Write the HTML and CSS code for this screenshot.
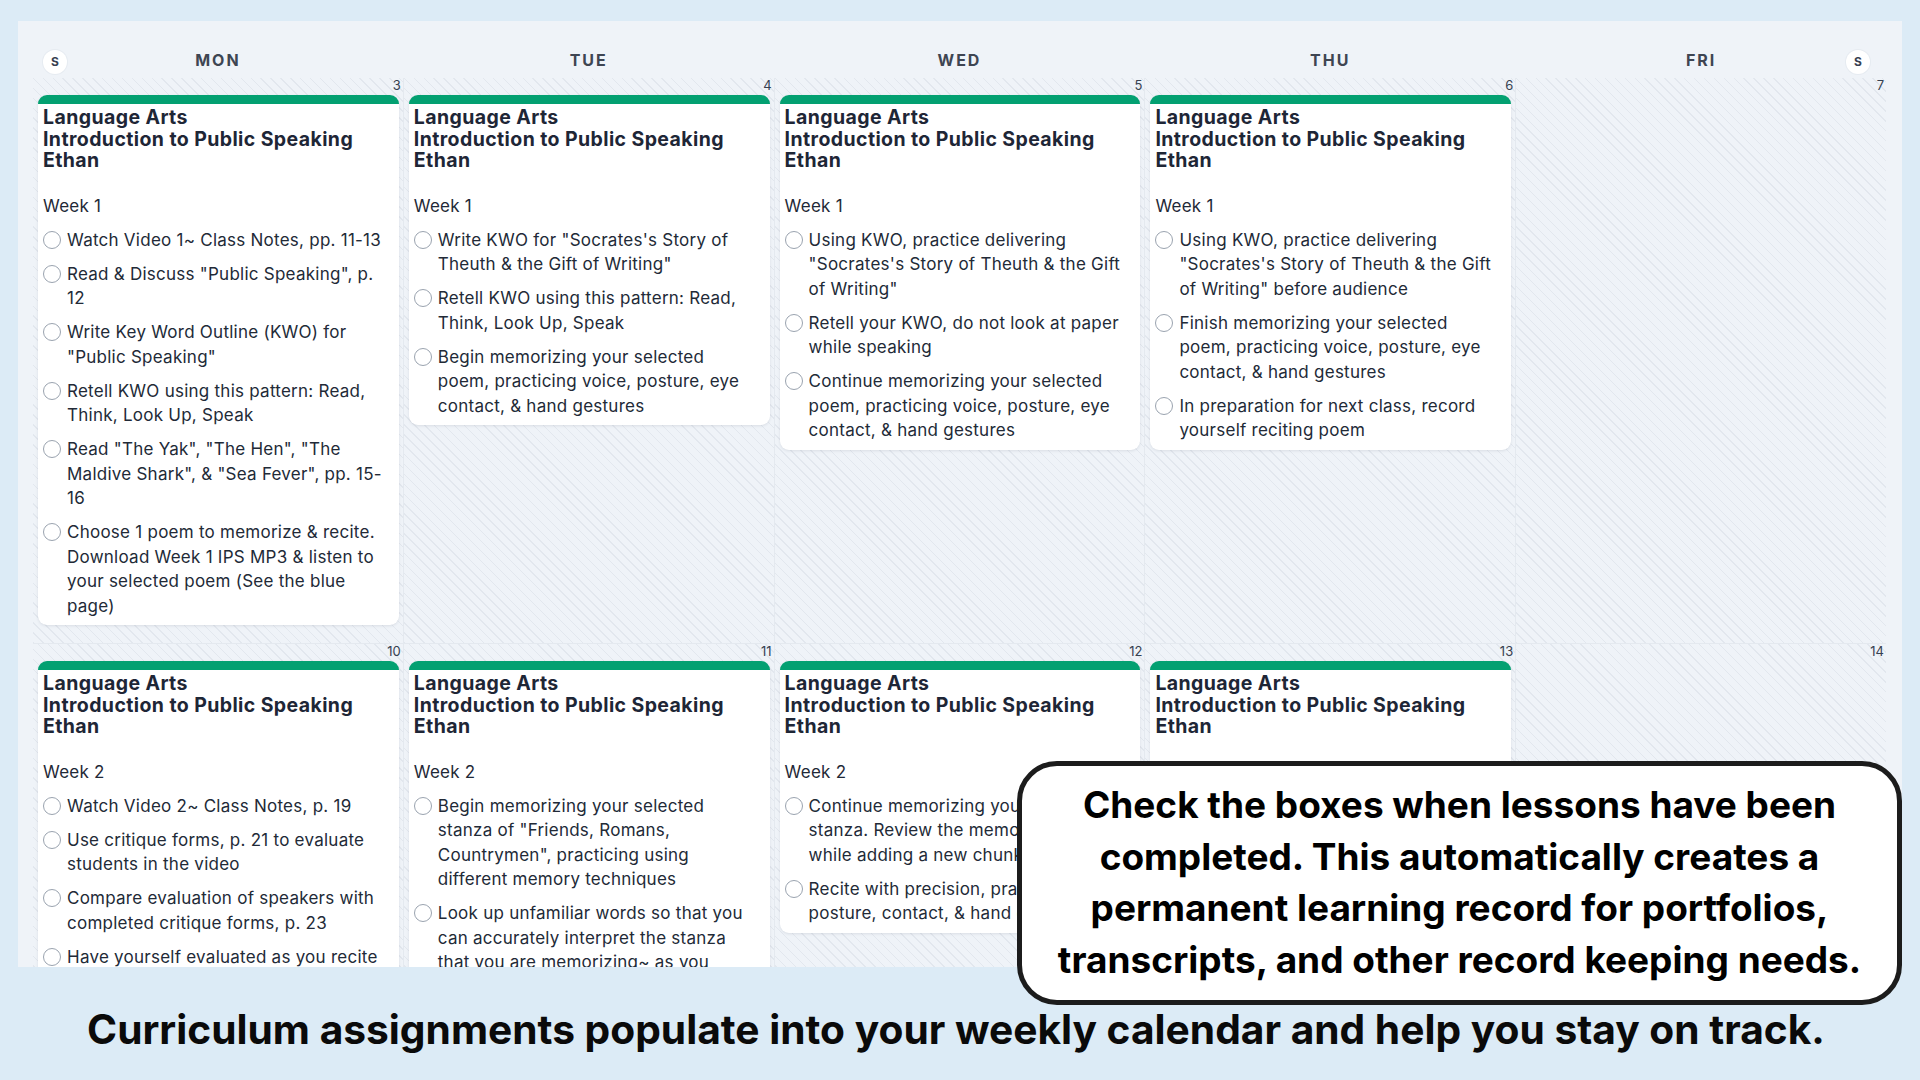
FILE: index.html
```html
<!DOCTYPE html>
<html>
<head>
<meta charset="utf-8">
<title>Weekly Planner</title>
<link rel="stylesheet" href="styles.css">
</head>
<body>
<div class="screen">

  <div class="calendar">
    <div class="weekdays">
      <span class="toggle toggle-left">S</span>
      <div class="dayname">MON</div>
      <div class="dayname">TUE</div>
      <div class="dayname">WED</div>
      <div class="dayname">THU</div>
      <div class="dayname">FRI</div>
      <span class="toggle toggle-right">S</span>
    </div>

    <div class="weeks">
      <!-- week 1 -->
      <div class="cell">
        <div class="date">3</div>
        <div class="lesson">
          <div class="lesson-title">Language Arts<br>Introduction to Public Speaking<br>Ethan</div>
          <div class="week">Week 1</div>
          <ul class="tasks">
            <li><span class="tick"></span><span>Watch Video 1~ Class Notes, pp. 11-13</span></li>
            <li><span class="tick"></span><span>Read &amp; Discuss "Public Speaking", p. 12</span></li>
            <li><span class="tick"></span><span>Write Key Word Outline (KWO) for "Public Speaking"</span></li>
            <li><span class="tick"></span><span>Retell KWO using this pattern: Read, Think, Look Up, Speak</span></li>
            <li><span class="tick"></span><span>Read "The Yak", "The Hen", "The Maldive Shark", &amp; "Sea Fever", pp. 15-16</span></li>
            <li><span class="tick"></span><span>Choose 1 poem to memorize &amp; recite. Download Week 1 IPS MP3 &amp; listen to your selected poem (See the blue page)</span></li>
          </ul>
        </div>
      </div>
      <div class="cell">
        <div class="date">4</div>
        <div class="lesson">
          <div class="lesson-title">Language Arts<br>Introduction to Public Speaking<br>Ethan</div>
          <div class="week">Week 1</div>
          <ul class="tasks">
            <li><span class="tick"></span><span>Write KWO for "Socrates's Story of Theuth &amp; the Gift of Writing"</span></li>
            <li><span class="tick"></span><span>Retell KWO using this pattern: Read, Think, Look Up, Speak</span></li>
            <li><span class="tick"></span><span>Begin memorizing your selected poem, practicing voice, posture, eye contact, &amp; hand gestures</span></li>
          </ul>
        </div>
      </div>
      <div class="cell">
        <div class="date">5</div>
        <div class="lesson">
          <div class="lesson-title">Language Arts<br>Introduction to Public Speaking<br>Ethan</div>
          <div class="week">Week 1</div>
          <ul class="tasks">
            <li><span class="tick"></span><span>Using KWO, practice delivering "Socrates's Story of Theuth &amp; the Gift of Writing"</span></li>
            <li><span class="tick"></span><span>Retell your KWO, do not look at paper while speaking</span></li>
            <li><span class="tick"></span><span>Continue memorizing your selected poem, practicing voice, posture, eye contact, &amp; hand gestures</span></li>
          </ul>
        </div>
      </div>
      <div class="cell">
        <div class="date">6</div>
        <div class="lesson">
          <div class="lesson-title">Language Arts<br>Introduction to Public Speaking<br>Ethan</div>
          <div class="week">Week 1</div>
          <ul class="tasks">
            <li><span class="tick"></span><span>Using KWO, practice delivering "Socrates's Story of Theuth &amp; the Gift of Writing" before audience</span></li>
            <li><span class="tick"></span><span>Finish memorizing your selected poem, practicing voice, posture, eye contact, &amp; hand gestures</span></li>
            <li><span class="tick"></span><span>In preparation for next class, record yourself reciting poem</span></li>
          </ul>
        </div>
      </div>
      <div class="cell">
        <div class="date">7</div>
      </div>

      <!-- week 2 -->
      <div class="cell">
        <div class="date">10</div>
        <div class="lesson">
          <div class="lesson-title">Language Arts<br>Introduction to Public Speaking<br>Ethan</div>
          <div class="week">Week 2</div>
          <ul class="tasks">
            <li><span class="tick"></span><span>Watch Video 2~ Class Notes, p. 19</span></li>
            <li><span class="tick"></span><span>Use critique forms, p. 21 to evaluate students in the video</span></li>
            <li><span class="tick"></span><span>Compare evaluation of speakers with completed critique forms, p. 23</span></li>
            <li><span class="tick"></span><span>Have yourself evaluated as you recite your selected poem</span></li>
          </ul>
        </div>
      </div>
      <div class="cell">
        <div class="date">11</div>
        <div class="lesson">
          <div class="lesson-title">Language Arts<br>Introduction to Public Speaking<br>Ethan</div>
          <div class="week">Week 2</div>
          <ul class="tasks">
            <li><span class="tick"></span><span>Begin memorizing your selected stanza of "Friends, Romans, Countrymen", practicing using different memory techniques</span></li>
            <li><span class="tick"></span><span>Look up unfamiliar words so that you can accurately interpret the stanza that you are memorizing~ as you practice</span></li>
          </ul>
        </div>
      </div>
      <div class="cell">
        <div class="date">12</div>
        <div class="lesson">
          <div class="lesson-title">Language Arts<br>Introduction to Public Speaking<br>Ethan</div>
          <div class="week">Week 2</div>
          <ul class="tasks">
            <li><span class="tick"></span><span>Continue memorizing your selected stanza. Review the memorized lines while adding a new chunk</span></li>
            <li><span class="tick"></span><span>Recite with precision, practicing voice, posture, contact, &amp; hand gestures</span></li>
          </ul>
        </div>
      </div>
      <div class="cell">
        <div class="date">13</div>
        <div class="lesson">
          <div class="lesson-title">Language Arts<br>Introduction to Public Speaking<br>Ethan</div>
          <div class="week">Week 2</div>
          <ul class="tasks">
            <li><span class="tick"></span><span>Recite your selected stanza for an audience</span></li>
            <li><span class="tick"></span><span>Record yourself reciting the stanza</span></li>
          </ul>
        </div>
      </div>
      <div class="cell">
        <div class="date">14</div>
      </div>
    </div>
  </div>

  <p class="caption">Curriculum assignments populate into your weekly calendar and help you stay on track.</p>

  <div class="callout">
    Check the boxes when lessons have been<br>
    completed. This automatically creates a<br>
    permanent learning record for portfolios,<br>
    transcripts, and other record keeping needs.
  </div>

</div>
</body>
</html>
```

FILE: styles.css
```css
body {
  margin: 0;
  background: #dcebf6;
  font-family: Inter, "Noto Sans", sans-serif;
  color: #1f2937;
}

.screen {
  position: relative;
  width: 1920px;
  height: 1080px;
  overflow: hidden;
}

/* calendar panel */
.calendar {
  margin: 21px 18px 0;
  height: 946px;
  padding: 0 16px 0 15px;
  box-sizing: border-box;
  background: #eff3f8;
  overflow: hidden;
}

.weekdays {
  position: relative;
  display: grid;
  grid-template-columns: repeat(5, 1fr);
  column-gap: 1px;
  height: 57px;
  padding-top: 29px;
  box-sizing: border-box;
}

.dayname {
  text-align: center;
  font-size: 16px;
  line-height: 20px;
  font-weight: 700;
  letter-spacing: 2px;
  color: #3e4552;
}

.toggle {
  position: absolute;
  top: 29px;
  width: 24px;
  height: 24px;
  border-radius: 50%;
  background: #fff;
  box-shadow: 0 0 0 1px #e6ebf1;
  font-size: 12px;
  line-height: 24px;
  font-weight: 700;
  text-align: center;
  color: #374151;
}
.toggle-left { left: 10px; }
.toggle-right { right: 16px; }

.weeks {
  display: grid;
  grid-template-columns: repeat(5, 1fr);
  grid-template-rows: 565px 1fr;
  gap: 1px;
  height: 889px;
  background: #e4e9ef;
}

.cell {
  padding: 0 4px 0 5px;
  min-width: 0;
  background-color: #eff3f8;
  background-image: repeating-linear-gradient(45deg, #e2e7ee 0 1px, transparent 1px 7px);
}

.date {
  height: 17px;
  margin-right: -2px;
  font-size: 13px;
  line-height: 14px;
  text-align: right;
  color: #374151;
}

/* lesson card */
.lesson {
  background: #fff;
  border-top: 9px solid #03a071;
  border-radius: 9px;
  box-shadow: 0 1px 3px rgba(30, 41, 59, 0.1);
  padding: 3px 12px 7px 5px;
}

.lesson-title {
  font-size: 19.5px;
  line-height: 21.5px;
  font-weight: 700;
  letter-spacing: 0.4px;
  color: #1e2636;
  margin-bottom: 22px;
}

.week {
  font-size: 17px;
  line-height: 24.5px;
  letter-spacing: 0.25px;
  color: #1f2937;
}

.tasks {
  list-style: none;
  margin: 9.5px 0 0;
  padding: 0;
  display: flex;
  flex-direction: column;
  gap: 9.5px;
}

.tasks li {
  display: flex;
  align-items: flex-start;
  gap: 6px;
  font-size: 17px;
  line-height: 24.5px;
  letter-spacing: 0.25px;
  color: #222a37;
}

.tick {
  flex-shrink: 0;
  width: 18px;
  height: 18px;
  margin-top: 3px;
  border: 1.5px solid #9aa3af;
  border-radius: 50%;
  box-sizing: border-box;
  background: #fff;
}

/* bottom line of text */
.caption {
  margin: 38px 0 0;
  text-align: center;
  font-size: 40.7px;
  line-height: 50px;
  font-weight: 700;
  color: #0a0a0a;
  padding-right: 8px;
}

.callout {
  position: absolute;
  left: 1017px;
  top: 761px;
  width: 885px;
  height: 244px;
  box-sizing: border-box;
  padding-top: 13px;
  background: #fff;
  border: 5px solid #1c1c1c;
  border-radius: 40px;
  text-align: center;
  font-size: 37px;
  line-height: 51.7px;
  font-weight: 700;
  color: #000;
}
```
